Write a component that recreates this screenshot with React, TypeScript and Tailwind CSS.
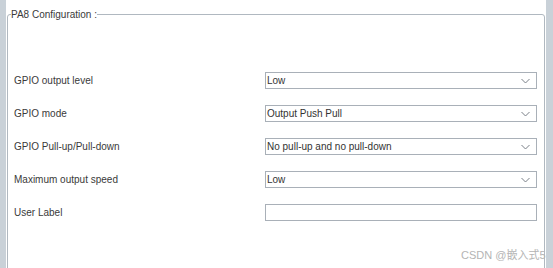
import React from "react";

const font = { fontFamily: '"Liberation Sans", Arial, "Noto Sans CJK SC", sans-serif' };

function Chevron() {
  return (
    <svg width="9" height="6" viewBox="0 0 9 6" className="shrink-0">
      <path d="M0.5 1 L4.5 5 L8.5 1" fill="none" stroke="#7a8088" strokeWidth="1" />
    </svg>
  );
}

function Select({ value }: { value: string }) {
  return (
    <div className="h-[17px] flex items-center justify-between border border-[#a9b0b8] bg-white pl-[1px] pr-[6px] text-[10px] text-[#333]">
      <span className="leading-none">{value}</span>
      <Chevron />
    </div>
  );
}

function Input() {
  return <div className="h-[17px] border border-[#a9b0b8] bg-white" />;
}

const rows: { label: string; kind: "select" | "input"; value?: string }[] = [
  { label: "GPIO output level", kind: "select", value: "Low" },
  { label: "GPIO mode", kind: "select", value: "Output Push Pull" },
  { label: "GPIO Pull-up/Pull-down", kind: "select", value: "No pull-up and no pull-down" },
  { label: "Maximum output speed", kind: "select", value: "Low" },
  { label: "User Label", kind: "input" },
];

export default function App() {
  return (
    <div className="relative w-[553px] h-[268px] overflow-hidden bg-white flex" style={font}>
      <div className="w-[6px] h-full bg-[#c9d1d8]" />
      <div className="flex-1 pl-[1px] pr-[1px]">
        <fieldset className="mt-[8px] h-[300px] border border-[#b0b8c0] rounded-t-[3px] pl-[3px] pr-[7px] pt-[51px]">
          <legend className="text-[10px] leading-[13px] text-[#3a3a3a] px-0">PA8 Configuration :</legend>
          <div className="pl-[3px] grid grid-cols-[251px_1fr] gap-y-[16px]">
            {rows.map((r) => (
              <React.Fragment key={r.label}>
                <div className="h-[17px] flex items-center text-[10px] text-[#3a3a3a]">{r.label}</div>
                {r.kind === "select" ? <Select value={r.value!} /> : <Input />}
              </React.Fragment>
            ))}
          </div>
        </fieldset>
      </div>
      <div className="w-[7px] h-full bg-[#c9d1d8]" />
      <div className="absolute left-[461px] top-[249px] text-[11px] leading-[13px] text-[#b4b4b4] whitespace-nowrap">
        CSDN @嵌入式5
      </div>
    </div>
  );
}
